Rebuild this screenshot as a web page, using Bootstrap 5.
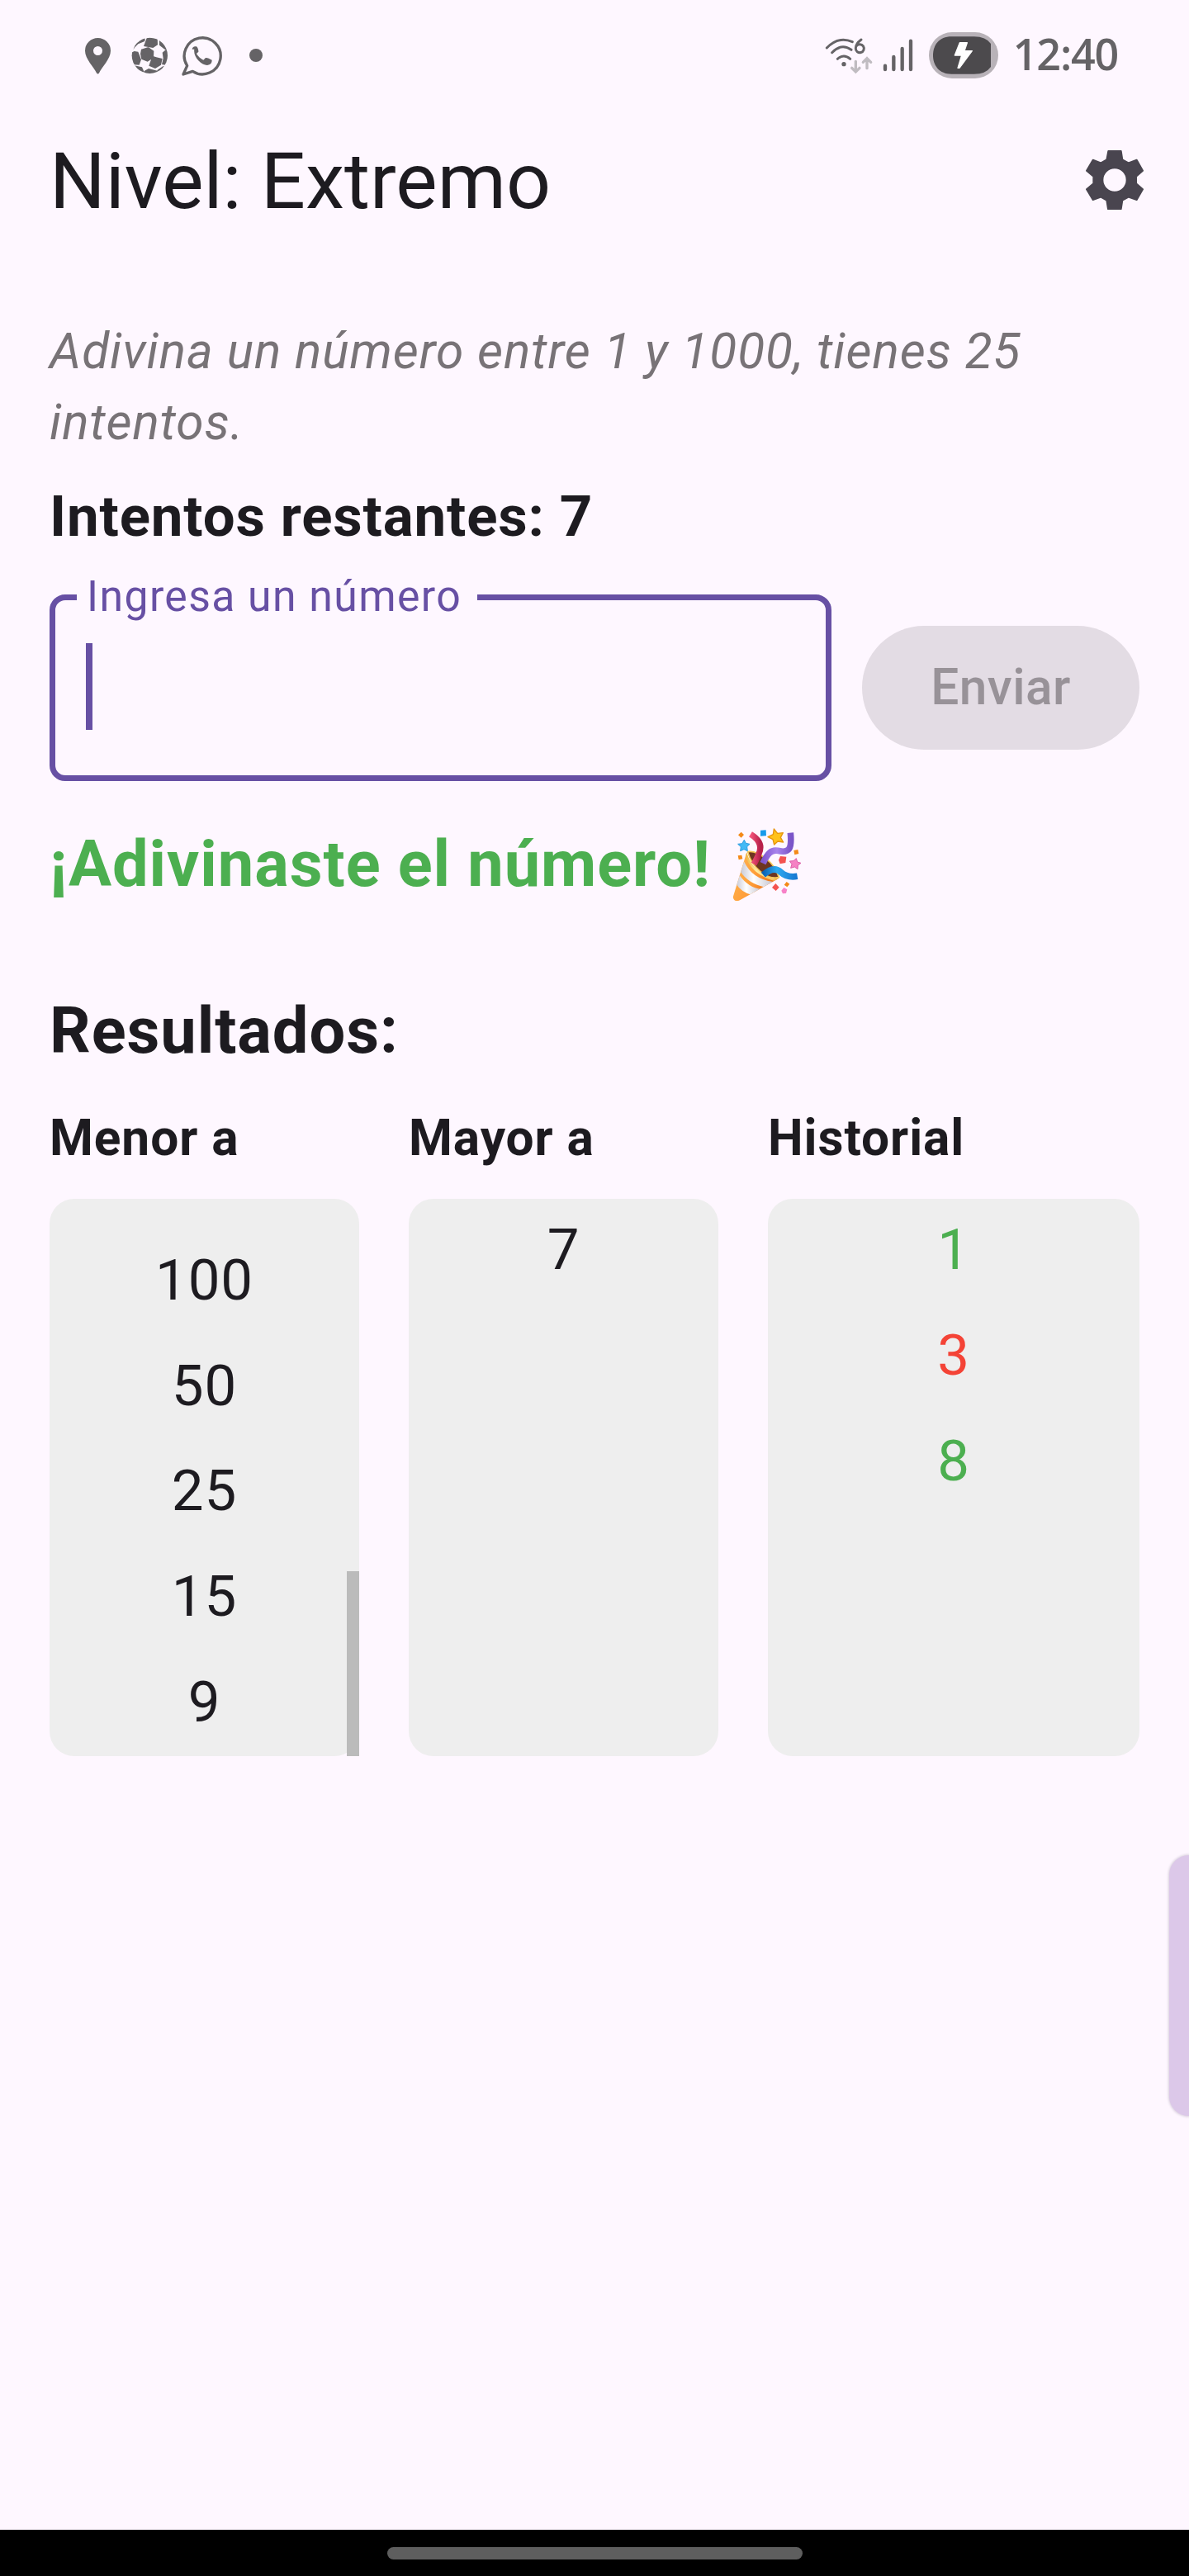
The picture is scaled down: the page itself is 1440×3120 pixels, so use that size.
<!DOCTYPE html>
<html lang="es">
<head>
<meta charset="utf-8">
<meta name="viewport" content="width=device-width, initial-scale=1">
<title>Nivel: Extremo</title>
<link href="https://cdn.jsdelivr.net/npm/bootstrap@5.3.0/dist/css/bootstrap.min.css" rel="stylesheet">
<style>
  body { background: #fef7ff; color: #1d1b20; font-family: Roboto, "Noto Sans", sans-serif; }
  .screen { width: 1440px; height: 3120px; overflow: hidden; }
  .status { height: 134px; padding: 0 86px 0 100px; color: #656366; }
  .clock { font: 600 52px/1 "Open Sans", sans-serif; width: 129px; letter-spacing: -1.2px; margin-bottom: 4px; white-space: nowrap; }
  .appbar { height: 171px; padding: 0 55px 0 60px; }
  .appbar h1 { font-size: 94.9px; line-height: 120px; }
  .gear { margin-bottom: 3px; }
  .content { padding: 78px 60px 0; }
  .hint { font-size: 60.4px; line-height: 86.3px; letter-spacing: .94px; color: #787377; }
  .tries { font-size: 69px; line-height: 98px; letter-spacing: .84px; margin-top: 21px; }
  .guess { margin-top: 45.4px; }
  .field { width: 947px; height: 226px; border: 7.5px solid #6750a4; border-radius: 19px; }
  .field-label { left: 26px; top: -34px; width: 484.5px; padding-left: 12px; background: #fef7ff; color: #6750a4; font-size: 51.75px; line-height: 60px; letter-spacing: 1.4px; white-space: nowrap; }
  .caret { width: 7.5px; height: 105px; background: #6750a4; margin: 52.5px 0 0 37px; }
  .send { width: 336px; height: 150px; background: #e3dce4; color: #989298; font-size: 60.4px; font-weight: 500; letter-spacing: .4px; }
  .win { font-size: 77.6px; line-height: 111px; letter-spacing: .94px; color: #4caf50; margin-top: 45px; }
  .party { width: 140px; height: 130px; margin: -11px 0 -8px 0; }
  .results { font-size: 77.6px; line-height: 111px; letter-spacing: .94px; margin-top: 91px; }
  .cols { gap: 60px; margin-top: 32px; }
  .col-a { width: 375px; } .col-b { width: 450px; }
  .cols h3 { font-size: 60.4px; line-height: 86px; letter-spacing: .94px; margin-bottom: 30px; }
  .panel { height: 675px; background: #eee; border-radius: 30px; font-size: 69px; letter-spacing: .94px; display: flow-root; }
  .panel li { line-height: 127.7px; }
  .panel ul { margin: -1.5px 0 0; }
  .panel .scrolled { margin-top: 35px; }
  .thumb { width: 15px; height: 224px; background: #bbb; }
  .ok { color: #4caf50; } .ko { color: #f44336; }
  .edge { width: 24px; height: 316px; right: 0; top: 2247px; background: #dcc8e9; border-radius: 24px 0 0 24px; box-shadow: 0 0 3px 1px #d8d0dc; }
  .navpill { width: 503px; height: 15px; border-radius: 8px; background: #5e5e5e; margin-top: 21px; }
  .navbottom { height: 56px; }
</style>
</head>
<body>
<div class="screen position-relative d-flex flex-column">
  <header class="status d-flex align-items-center justify-content-between">
    <svg width="230" height="60" viewBox="100 37 230 60">
      <path fill="#656366" fill-rule="evenodd" d="M118.500 46a15.500 15.500 0 0 0-15.500 15.500c0 10 11 20 14 27q1.500 2 3 0c3-7 14-17 14-27a15.500 15.500 0 0 0-15.500-15.500zm0 10a5.500 5.500 0 1 1 0 11 5.500 5.500 0 0 1 0-11z"/>
      <g transform="translate(80 30) scale(.33333)">
        <clipPath id="ball"><circle cx="304" cy="112" r="65"/></clipPath>
        <g clip-path="url(#ball)" fill="#656366">
          <path d="M294 46h38l1 27-17 11-34-6zM338 46l40 36v14l-20-7-19-15zM273 89l26-8 20 14-1 25-22 14-22-9-4-19zM314 113l14 5 22 5-5 23-21 13-23-10 4-12zM350 101l12-10 12 5v30l-14 20-12-2 5-22zM236 102l12-6 14 2 11 29-7 19-20-1-12-15zM244 90l8-22 36-24-2 16-24 10-12 12zM248 148l28 6 8 18-14 4zM284 168l16-9 32 8-6 18h-42zM332 164l20-13 12-2-16 26-20 2z"/>
        </g>
        <path fill="none" stroke="#656366" stroke-width="10" stroke-linejoin="round" d="M440 149a66 66 0 1 1 20 20l-34 11z"/>
        <path fill="#656366" d="M458 89c1-8 7-12 15-10 5 1 9 15 8 19l-7 7c5 10 15 18 25 23l8-8c4-2 20 5 23 9 0 10-5 16-17 18-22 0-52-30-47-58z"/>
        <circle cx="690" cy="111" r="24" fill="#656366"/>
      </g>
    </svg>
    <div class="d-flex align-items-center gap-3">
      <svg width="212" height="60" viewBox="997 37 212 60">
        <g transform="translate(980 30) scale(.33333)" fill="none" stroke-linecap="round">
          <g stroke="#656366" stroke-width="9">
            <path d="M64 84q42-44 93-22M83 101q34-36 70-10M103 124q23-20 46 0"/>
            <path d="M189 54q-20 15-20 31a15 15 0 1 0 3-8" stroke-width="9"/>
          </g>
          <circle cx="126" cy="143" r="8" fill="#656366"/>
          <path stroke="#c0bcc1" stroke-width="10" d="M169 133v36M155 157l14 14 14-14M210 158v-36M196 136l14-14 14 14"/>
          <path stroke="#656366" stroke-width="13" d="M276 149v13M307 117v45M338 87v75M369 59v103"/>
          <rect x="435" y="27" width="252" height="168" rx="84" fill="#b8b2b8"/>
          <path fill="#4c4a4d" d="M517 43h82q43 0 61 26v84q-18 26-61 26h-82c-45 0-67-31-67-68s22-68 67-68z"/>
          <path fill="#fff" stroke="#fff" stroke-width="4" stroke-linejoin="round" d="M547 65h27l-10 30h28l-46 62h-6l14-46h-25z"/>
        </g>
      </svg>
      <div class="clock text-end">12:40</div>
    </div>
  </header>
  <div class="appbar d-flex align-items-center justify-content-between">
    <h1 class="fw-normal m-0">Nivel: Extremo</h1>
    <svg class="gear" width="70" height="72" viewBox="105 66 210 216">
      <path fill="#49454f" stroke="#49454f" stroke-width="6" stroke-linejoin="round" fill-rule="evenodd" d="M187 69h46l5 31 22 12 30-11 22 39-24 21v26l24 21-22 38-30-10-22 12-5 31h-47l-5-31-21-12-29 10-23-38 25-21v-26l-25-21 23-39 29 11 21-12zM210 130a44 44 0 1 0 0 88 44 44 0 0 0 0-88z"/>
    </svg>
  </div>
  <main class="content flex-grow-1">
    <p class="hint fst-italic mb-0">Adivina un número entre 1 y 1000, tienes 25 intentos.</p>
    <p class="tries fw-bold mb-0">Intentos restantes: 7</p>
    <div class="guess d-flex align-items-center justify-content-between">
      <div class="field position-relative">
        <label class="field-label position-absolute">Ingresa un número</label>
        <div class="caret"></div>
      </div>
      <div class="send rounded-pill d-flex align-items-center justify-content-center">Enviar</div>
    </div>
    <div class="win fw-bold d-flex align-items-center">¡Adivinaste el número!
      <svg class="party" viewBox="0 0 420 390">
        <defs>
          <linearGradient id="cone" x1="85" y1="230" x2="210" y2="290" gradientUnits="userSpaceOnUse"><stop offset="0" stop-color="#ffb04d"/><stop offset=".5" stop-color="#ffa03a"/><stop offset="1" stop-color="#ef7418"/></linearGradient>
          <linearGradient id="white" x1="0" x2="1"><stop offset="0" stop-color="#c9cad6"/><stop offset=".4" stop-color="#fff"/><stop offset="1" stop-color="#c3c4d0"/></linearGradient>
          <linearGradient id="rim" x1="0" x2="1"><stop offset="0" stop-color="#eab23c"/><stop offset=".35" stop-color="#fff0a0"/><stop offset="1" stop-color="#f0b040"/></linearGradient>
          <linearGradient id="red" x1="0" x2="1"><stop offset="0" stop-color="#f5577c"/><stop offset="1" stop-color="#b71f4a"/></linearGradient>
          <linearGradient id="vio" x1="0" x2="1"><stop offset="0" stop-color="#8157d0"/><stop offset=".5" stop-color="#a884ec"/><stop offset="1" stop-color="#7a55c8"/></linearGradient>
          <linearGradient id="blu" x1="0" x2="1"><stop offset="0" stop-color="#0b62b5"/><stop offset=".4" stop-color="#2eaaf0"/><stop offset="1" stop-color="#1576d0"/></linearGradient>
        </defs>
        <clipPath id="body"><path d="M130 157C140 205 195 260 246 252L105 331Q86 340 80 320z"/></clipPath>
        <g clip-path="url(#body)">
          <path fill="url(#cone)" d="M70 140h190v210H70z"/>
          <path fill="url(#white)" d="M104 240Q135 285 183 291l-32 22Q108 300 92 272z"/>
          <path fill="url(#white)" d="M120 190Q150 255 226 264l-29 20Q135 270 108 228z"/>
          <path fill="url(#rim)" d="M122 150Q133 240 250 266V240Z"/>
        </g>
        <path fill="#6d3520" stroke="#f3c552" stroke-width="5" d="M134 155C165 148 232 190 247 248C205 258 148 212 134 155z"/>
        <path fill="none" stroke="url(#red)" stroke-width="22" d="M144 91C172 108 189 130 174 162Q169 177 156 200"/>
        <path fill="none" stroke="url(#vio)" stroke-width="23" d="M189 197C206 160 220 147 242 151C285 161 295 145 289 86"/>
        <path fill="none" stroke="url(#blu)" stroke-width="23" d="M190 239C218 214 238 214 254 229C272 246 290 248 314 244"/>
        <path fill="#ffc21a" stroke="#e7950e" stroke-width="4" stroke-linejoin="round" d="M229 72l13 16 20-2-9 17 10 17-20-3-13 12-5-19-18-9 19-9z"/>
        <path fill="#42b9f5" stroke="#2b9ce0" stroke-width="3" stroke-linejoin="round" d="M121 112l6 12 14 3-10 10 2 15-13-6-13 6 2-15-11-10 15-2z"/>
        <path fill="#f581c4" stroke="#dd5fa8" stroke-width="3" stroke-linejoin="round" d="M310 179l4 13 13 4-11 8-1 14-11-8-14 4 4-14-8-11 14-1z"/>
        <path fill="#189bea" d="M180 77l20-1 1 21-21 1z"/>
        <path fill="#f48a18" d="M110 83l10 10-10 11-11-10zM98 169l14-2 3 14-14 3zM301 150l15-3 3 15-15 4zM275 264l11 8-9 11-11-8z"/>
        <path fill="#f45350" d="M252 171l22 2-3 22-20 4-5-14zM235 270l13 14-12 13-14-12z"/>
        <path fill="#f781c8" d="M265 285l12 7-4 14-12 1-5-11z"/>
      </svg>
    </div>
    <h2 class="results fw-bold mb-0">Resultados:</h2>
    <div class="cols d-flex">
      <section class="col-a"><h3 class="fw-bold mt-0">Menor a</h3>
        <div class="panel position-relative">
          <ul class="list-unstyled text-center scrolled"><li>100</li><li>50</li><li>25</li><li>15</li><li>9</li></ul>
          <div class="thumb position-absolute end-0 bottom-0"></div>
        </div>
      </section>
      <section class="col-a"><h3 class="fw-bold mt-0">Mayor a</h3>
        <div class="panel"><ul class="list-unstyled text-center"><li>7</li></ul></div>
      </section>
      <section class="col-b"><h3 class="fw-bold mt-0">Historial</h3>
        <div class="panel"><ul class="list-unstyled text-center"><li class="ok">1</li><li class="ko">3</li><li class="ok">8</li></ul></div>
      </section>
    </div>
  </main>
  <div class="edge position-absolute"></div>
  <footer class="navbottom bg-black d-flex justify-content-center align-items-start"><div class="navpill"></div></footer>
</div>
<script src="https://cdn.jsdelivr.net/npm/bootstrap@5.3.0/dist/js/bootstrap.bundle.min.js"></script>
</body>
</html>
